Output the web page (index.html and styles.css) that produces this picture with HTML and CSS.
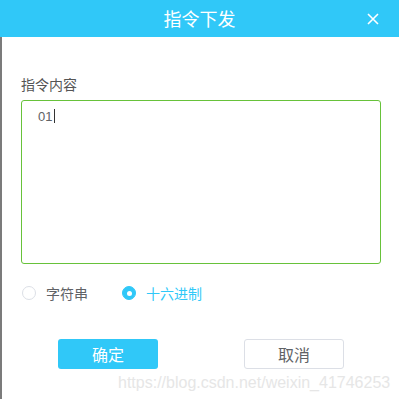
FILE: index.html
```html
<!DOCTYPE html>
<html lang="zh-CN">
<head>
  <meta charset="UTF-8">
  <meta name="viewport" content="width=device-width, initial-scale=1.0">
  <title>指令下发</title>
  <link rel="stylesheet" href="styles.css">
</head>
<body>

  <div class="dialog">
    <div class="dialog-header">
      <span></span>
      <span class="dialog-title">指令下发</span>
      <span class="close-dialog">
        <svg width="12" height="12" viewBox="0 0 12 12"><path d="M1 1L11 11M11 1L1 11" stroke="#fff" stroke-width="1.6" fill="none"/></svg>
      </span>
    </div>

    <div class="dialog-body">
      <div class="form-label">指令内容</div>
      <div class="command-box">01<span class="caret"></span></div>

      <div class="radio-group">
        <label class="radio">
          <span class="radio-circle"></span>
          <span class="radio-text">字符串</span>
        </label>
        <label class="radio checked">
          <span class="radio-circle"></span>
          <span class="radio-text">十六进制</span>
        </label>
      </div>

      <div class="dialog-footer">
        <button type="button" class="btn btn-primary">确定</button>
        <button type="button" class="btn btn-default">取消</button>
      </div>

      <div class="watermark">https://blog.csdn.net/weixin_41746253</div>
    </div>
  </div>

</body>
</html>
```

FILE: styles.css
```css
body {
  margin: 0;
  font-family: "Noto Sans CJK SC", "Liberation Sans", sans-serif;
  background: #fff;
}

.dialog {
  width: 399px;
  height: 399px;
  overflow: hidden;
}

.dialog-header {
  height: 37px;
  background: #30c8f8;
  display: grid;
  grid-template-columns: 1fr auto 1fr;
  align-items: center;
}

.dialog-title {
  color: #fff;
  font-size: 18px;
  line-height: 37px;
}

.close-dialog {
  justify-self: end;
  display: flex;
  padding-right: 20px;
  cursor: pointer;
}

.dialog-body {
  border-left: 2px solid #7b7b7b;
  padding: 37px 18px 0 19px;
  height: 362px;
}

.form-label {
  font-size: 14px;
  line-height: 20px;
  color: #555;
  margin-bottom: 6px;
}

.command-box {
  border: 1px solid #67c23a;
  border-radius: 3px;
  padding: 6px 16px;
  font-family: "Liberation Sans", sans-serif;
  font-size: 13px;
  line-height: 20px;
  color: #606266;
  box-sizing: border-box;
  height: 164px;
}

.caret {
  display: inline-block;
  width: 1px;
  height: 14px;
  background: #333;
  margin-left: 2px;
  vertical-align: -2px;
}

.radio-group {
  display: flex;
  gap: 34px;
  margin-top: 19px;
  padding-left: 1px;
}

.radio {
  display: flex;
  align-items: center;
  gap: 10px;
  font-size: 14px;
  line-height: 20px;
  color: #606266;
  cursor: pointer;
}

.radio-circle {
  width: 14px;
  height: 14px;
  border: 1px solid #dcdfe6;
  border-radius: 50%;
  box-sizing: border-box;
  display: flex;
  align-items: center;
  justify-content: center;
}

.radio.checked .radio-circle {
  background: #30c8f8;
  border-color: #30c8f8;
}

.radio.checked .radio-circle::after {
  content: "";
  width: 5px;
  height: 5px;
  border-radius: 50%;
  background: #fff;
}

.radio.checked .radio-text {
  color: #30c8f8;
}

.dialog-footer {
  display: flex;
  gap: 86px;
  margin-top: 36px;
  padding-left: 37px;
}

.btn {
  width: 100px;
  height: 30px;
  border-radius: 3px;
  font-family: "Noto Sans CJK SC", sans-serif;
  font-size: 16px;
  cursor: pointer;
  padding: 0;
}

.btn-primary {
  background: #30c8f8;
  color: #fff;
  border: none;
}

.btn-default {
  background: #fff;
  color: #606266;
  border: 1px solid #dcdfe6;
}

.watermark {
  margin-top: 5px;
  padding-left: 97px;
  font-family: "Liberation Sans", sans-serif;
  font-size: 16px;
  line-height: 18px;
  color: #e6e6e6;
  white-space: nowrap;
}
```
